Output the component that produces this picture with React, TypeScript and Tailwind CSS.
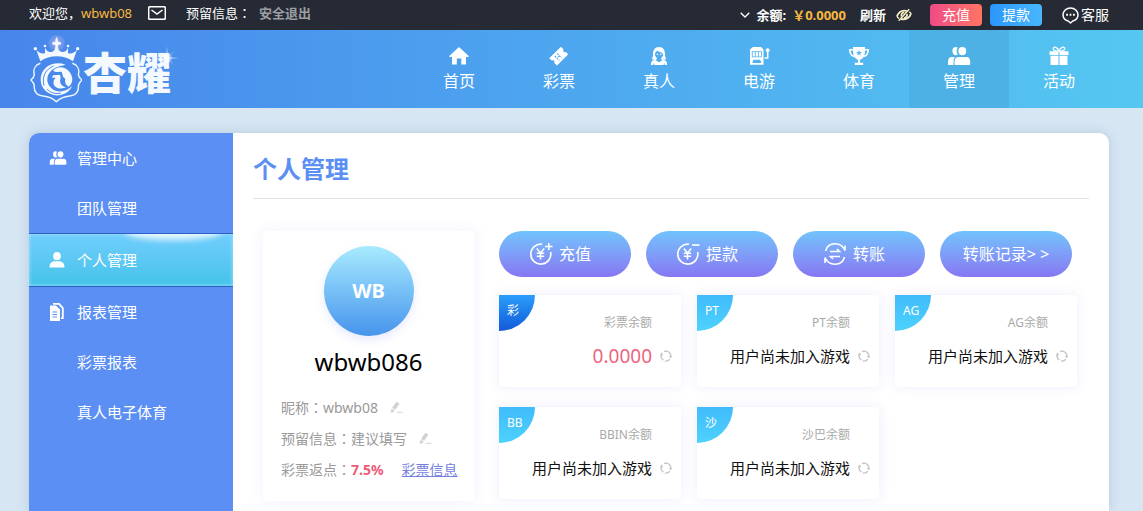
import type { ReactNode } from "react";

type IconProps = { className?: string };

function LogoEmblem({ className }: IconProps) {
  return (
    <svg viewBox="15 15 156 210" className={className} fill="none" aria-hidden="true">
      <defs>
        <radialGradient id="crownGlow">
          <stop offset="0" stopColor="#fff" stopOpacity="0.75" />
          <stop offset="0.5" stopColor="#e6b8e8" stopOpacity="0.35" />
          <stop offset="1" stopColor="#fff" stopOpacity="0" />
        </radialGradient>
      </defs>
      <circle cx="95" cy="42" r="27" fill="url(#crownGlow)" />
      <path
        fill="#f3f9ff"
        d="M46 97 L34 62 C42 72 52 76 60 72 L60 56 C65 67 76 73 86 66 C91 61 91 54 91 48 L82 46 C80 40 86 38 91 40 C92 34 90 31 95 23 C100 31 98 34 99 40 C104 38 110 40 108 46 L99 48 C99 54 99 61 104 66 C114 73 125 67 129 56 L129 72 C138 76 148 72 156 62 L144 97 C116 77 74 77 46 97 Z"
      />
      <g fill="#f3f9ff">
        <circle cx="31" cy="59" r="5" />
        <circle cx="60" cy="51" r="4" />
        <circle cx="129" cy="51" r="4" />
        <circle cx="158" cy="59" r="5" />
      </g>
      <path
        stroke="#e9f5ff"
        strokeWidth="4.5"
        strokeLinejoin="round"
        d="M46 103 C30 108 24 122 28 137 C27 144 23 149 18 153 C23 158 27 163 28 170 C26 189 37 199 54 201 C71 203 83 207 94 218 C105 207 117 203 134 201 C151 199 162 189 160 170 C161 163 165 158 171 153 C165 149 161 144 160 137 C164 122 158 108 142 103"
      />
      <path
        fill="#f3f9ff"
        d="M122 107 C88 94 50 112 47 148 C45 180 72 202 102 199 C122 196 136 185 141 171 C128 185 108 191 92 185 C68 177 60 150 73 132 C82 118 98 112 122 107 Z"
      />
      <path stroke="#4c8feb" strokeWidth="3" d="M57 170 C50 142 62 120 86 111 M66 180 C76 192 92 196 108 192" />
      <path
        fill="#f3f9ff"
        d="M84 125 C94 115 108 113 118 117 C131 122 141 135 142 150 C142 160 138 168 131 173 C123 169 118 160 121 150 L114 143 L110 128 L92 129 Z"
      />
      <path
        fill="#f3f9ff"
        d="M105 137 L84 139 L81 146 L92 146 C84 154 83 165 91 173 C100 180 114 180 123 175 C109 172 102 161 107 147 Z"
      />
    </svg>
  );
}

function HomeIcon({ className }: IconProps) {
  return (
    <svg viewBox="0 0 22 20" className={className} fill="currentColor" aria-hidden="true">
      <path d="M11 1 L21 10.2 L20.2 11 H18 V18.5 H13.3 V12.5 H8.8 V18.5 H4 V11 H1.8 L1 10.2 Z" />
    </svg>
  );
}

function TicketIcon({ className }: IconProps) {
  return (
    <svg viewBox="0 0 22 20" className={className} fill="currentColor" aria-hidden="true">
      <path d="M1.2 12.2 L13 .8 L15.5 3.4 C14.7 5.3 16 6.8 17.8 6 L20.3 8.2 L9 19.6 L6.3 16.9 C7 15 5.8 13.6 3.9 14.6 Z" />
      <path d="M9.2 7.5 L13.8 12.1 M6.8 10 L11.4 14.6 M11.3 9.8 L8.8 12.4" stroke="#4fa7ee" strokeWidth="1.1" strokeDasharray="1.8 1.2" />
    </svg>
  );
}

function DealerIcon({ className }: IconProps) {
  return (
    <svg viewBox="0 0 22 20" className={className} fill="currentColor" aria-hidden="true">
      <path
        fillRule="evenodd"
        d="M11 1 C6.7 1 5 4.5 5 8 C5 10.4 4.6 12 3.6 13.2 L7.4 14 C9.3 13.6 9 12.5 8.8 12 C6.2 9.5 6.3 6 9.8 4.8 C12 7.2 15 6 15.1 8.6 C15 10.3 14.2 11.4 13.2 12 C13 13 13.3 13.7 14.6 14 L18.4 13.2 C17.4 12 17 10.4 17 8 C17 4.5 15.3 1 11 1 Z"
      />
      <path d="M3 19 C2.5 16 4 14.3 7 13.8 L11 16.2 L15 13.8 C18 14.3 19.5 16 19 19 L16.6 19 V17 L15.4 19 H6.6 L5.4 17 V19 Z" />
      <circle cx="9.5" cy="8.2" r="0.8" />
      <circle cx="12.8" cy="8.2" r="0.8" />
    </svg>
  );
}

function SlotIcon({ className }: IconProps) {
  return (
    <svg viewBox="0 0 22 20" className={className} fill="currentColor" aria-hidden="true">
      <path
        fillRule="evenodd"
        d="M5 1 H13 L15.5 3.5 V18.8 H2 V3.5 Z M3.8 5.2 V11.2 H13.8 V5.2 Z M4.5 15.8 V17 H13 V15.8 L12 13.8 H5.5 Z"
      />
      <path d="M4.7 6 H6.8 V10.4 H4.7 Z M7.7 6 H9.9 V10.4 H7.7 Z M10.8 6 H13 V10.4 H10.8 Z" />
      <path d="M16.5 12 H19.7 V5" stroke="currentColor" strokeWidth="1.6" fill="none" />
      <circle cx="19.7" cy="4.2" r="1.9" />
    </svg>
  );
}

function TrophyIcon({ className }: IconProps) {
  return (
    <svg viewBox="0 0 22 20" className={className} fill="currentColor" aria-hidden="true">
      <path
        fillRule="evenodd"
        d="M5 1 H17 V3 H21 C21 8 19 10.7 15.3 11.3 C14.3 13 13 13.5 12 14 V16.7 H15.2 V19 H6.8 V16.7 H10 V14 C9 13.5 7.7 13 6.7 11.3 C3 10.7 1 8 1 3 H5 Z M2.7 4.5 C3 7.3 4 9 5.7 9.5 C5.2 8 5 6.2 5 4.5 Z M19.3 4.5 H17 C17 6.2 16.8 8 16.3 9.5 C18 9 19 7.3 19.3 4.5 Z M11 4 L10.2 5.9 L8.1 6 L9.7 7.4 L9.2 9.4 L11 8.3 L12.8 9.4 L12.3 7.4 L13.9 6 L11.8 5.9 Z"
      />
    </svg>
  );
}

function TeamIcon({ className }: IconProps) {
  return (
    <svg viewBox="0 0 24 20" className={className} fill="currentColor" aria-hidden="true">
      <path d="M8.7 1 C6.7 1 5.4 2.6 5.4 4.9 C5.4 7.3 6.8 9.2 8.8 9.3 C9.5 9.3 10.2 9 10.7 8.5 C9.3 6.3 9.3 3.8 10.8 1.8 C10.2 1.3 9.5 1 8.7 1 Z" />
      <ellipse cx="15.3" cy="5.1" rx="3.9" ry="4.2" />
      <path d="M8 11 H5 C2.3 11 1 13 1 15.6 V19 H6.5 V15.5 C6.5 13.5 7 12 8 11 Z M11.5 11 H19.5 C22 11 23.2 13 23.2 15.3 V17.7 C23.2 18.5 22.7 19 22 19 H8.7 C8 19 7.5 18.5 7.5 17.7 V15.3 C7.5 13 9 11 11.5 11 Z" />
    </svg>
  );
}

function GiftIcon({ className }: IconProps) {
  return (
    <svg viewBox="0 0 22 20" className={className} fill="currentColor" aria-hidden="true">
      <path d="M1.5 5.3 H10.5 V9 H1.5 Z M11.5 5.3 H20.5 V9 H11.5 Z M2.5 9.8 H10.5 V19 H2.5 Z M11.5 9.8 H19.5 V19 H11.5 Z" />
      <path d="M11 5 C7 5.4 4.7 4 5.3 2.3 C6 .3 9.5 1.2 11 5 C12.5 1.2 16 .3 16.7 2.3 C17.3 4 15 5.4 11 5 Z" fill="none" stroke="currentColor" strokeWidth="1.3" />
    </svg>
  );
}

function PersonIcon({ className }: IconProps) {
  return (
    <svg viewBox="0 0 16 16" className={className} fill="currentColor" aria-hidden="true">
      <ellipse cx="8" cy="4.2" rx="3.8" ry="4.1" />
      <path d="M1 15.5 Q.5 15.5 .5 15 C.5 11.5 3 9.3 5.5 9.3 H10.5 C13 9.3 15.5 11.5 15.5 15 Q15.5 15.5 15 15.5 Z" />
    </svg>
  );
}

function ReportIcon({ className }: IconProps) {
  return (
    <svg viewBox="0 0 16 18" className={className} fill="currentColor" aria-hidden="true">
      <path fillRule="evenodd" d="M1 2.5 H7 L11 6.5 V18 H1 Z M3.5 8.5 V9.5 H8 V8.5 Z M3.5 11 V12 H8 V11 Z M3.5 13.5 V14.5 H8 V13.5 Z" />
      <path d="M4 .8 H10 L13.8 5.2 V15.2 H12" fill="none" stroke="currentColor" strokeWidth="1.8" />
    </svg>
  );
}

function MailIcon({ className }: IconProps) {
  return (
    <svg viewBox="0 0 18 14" className={className} fill="none" stroke="currentColor" strokeWidth="1.5" aria-hidden="true">
      <rect x="0.7" y="0.7" width="16.6" height="12.6" rx="1.2" />
      <path d="M3.5 4 L9 8 L14.5 4" />
    </svg>
  );
}

function EyeOffIcon({ className }: IconProps) {
  return (
    <svg viewBox="0 0 16 14" className={className} fill="none" stroke="currentColor" aria-hidden="true">
      <path d="M1 8.2 C3 3.5 7 2 11 3 M15 5.5 C14 9.5 10 12 5 11" strokeWidth="1.8" />
      <path d="M1 8 C1.4 9.4 2.3 10 3.2 10.4 M15 5.8 C14.7 4.8 14 4.2 13.2 3.8" strokeWidth="1.4" />
      <path d="M2.7 12.8 L13.2 1.2" strokeWidth="1.5" />
      <path d="M5.5 8.5 C4.8 6.3 6.2 4.6 8.4 4.4 M8 10 C10.3 9.6 11.3 8 11 6" strokeWidth="1.8" />
    </svg>
  );
}

function ChatIcon({ className }: IconProps) {
  return (
    <svg viewBox="0 0 17 17" className={className} fill="none" stroke="currentColor" strokeWidth="1.5" aria-hidden="true">
      <path d="M6.2 14 C3 13.2 1 10.8 1 7.8 C1 4 4.3 1 8.5 1 S16 4 16 7.8 C16 10.8 13.8 13.2 10.8 14 L8.5 16 Z" strokeLinejoin="round" />
      <path d="M4.2 7.8 H6 M7.6 7.8 H9.4 M11 7.8 H12.8" strokeWidth="1.9" />
    </svg>
  );
}

function YuanIcon({ className, sign }: IconProps & { sign: "plus" | "minus" }) {
  return (
    <svg viewBox="0 0 24 24" className={className} fill="none" stroke="currentColor" strokeWidth="1.6" aria-hidden="true">
      <path d="M13 2.2 A10 10 0 1 0 21.6 10" />
      <path d="M7.8 6.5 L11.5 11 L15.2 6.5 M11.5 11 V17.5 M7.8 11.3 H15.2 M7.8 14.2 H15.2" />
      <path d={sign === "plus" ? "M16 4.5 H23.5 M19.8 1 V8" : "M16 3 H23.5"} />
    </svg>
  );
}

function TransferIcon({ className }: IconProps) {
  return (
    <svg viewBox="0 0 24 24" className={className} fill="none" stroke="currentColor" strokeWidth="1.6" aria-hidden="true">
      <path d="M2.5 9 C5 -.3 18 -.8 22 8.5 V3.5 M21.5 15 C19 24.3 6 24.8 2 15.5 V21" />
      <path d="M7 9.5 H16.5 L14 7 M17 14.5 H7.5 L10 17" />
    </svg>
  );
}

function RefreshIcon({ className }: IconProps) {
  return (
    <svg viewBox="0 0 12 12" className={className} fill="none" stroke="currentColor" strokeWidth="1.4" aria-hidden="true">
      <path d="M3.4 10.2 A5 5 0 0 1 2 3 M4 1.5 A5 5 0 0 1 10.8 7 M9.8 9.2 A5 5 0 0 1 5 11" />
      <path d="M.2 5.6 L1.4 4 L3 5.4 M9.2 6.4 L10.8 7.8 L12 6.2" strokeWidth="1" />
    </svg>
  );
}

function EditIcon({ className }: IconProps) {
  return (
    <svg viewBox="0 0 13 13" className={className} fill="currentColor" aria-hidden="true">
      <path d="M.6 11.8 L1.5 7.8 L4.6 9.6 L3.5 11.2 Z M2 7 L6.4 .8 L9.5 2.7 L5.1 8.8 Z M7 10.7 H12.5 V11.8 H7 Z" />
    </svg>
  );
}

// full-width colon, centred in its cell
function Colon() {
  return <span className="font-['Noto_Sans_CJK_TC',sans-serif]">：</span>;
}

interface NavItem {
  label: string;
  icon: ReactNode;
  active?: boolean;
}

const NAV_ITEMS: NavItem[] = [
  { label: "首页", icon: <HomeIcon className="h-5 w-[22px]" /> },
  { label: "彩票", icon: <TicketIcon className="h-5 w-[22px]" /> },
  { label: "真人", icon: <DealerIcon className="h-5 w-[22px]" /> },
  { label: "电游", icon: <SlotIcon className="h-5 w-[22px]" /> },
  { label: "体育", icon: <TrophyIcon className="h-5 w-[22px]" /> },
  { label: "管理", icon: <TeamIcon className="h-5 w-6" />, active: true },
  { label: "活动", icon: <GiftIcon className="h-5 w-[22px]" /> },
];

const MENU_ITEMS: { label: string; icon?: ReactNode; active?: boolean }[] = [
  { label: "管理中心", icon: <TeamIcon className="h-4 w-[18px]" /> },
  { label: "团队管理" },
  { label: "个人管理", icon: <PersonIcon className="size-4" />, active: true },
  { label: "报表管理", icon: <ReportIcon className="h-[18px] w-4" /> },
  { label: "彩票报表" },
  { label: "真人电子体育" },
];

const ACTIONS: { label: string; icon?: ReactNode }[] = [
  { label: "充值", icon: <YuanIcon sign="plus" className="size-6" /> },
  { label: "提款", icon: <YuanIcon sign="minus" className="size-6" /> },
  { label: "转账", icon: <TransferIcon className="size-6" /> },
  { label: "转账记录> >" },
];

const BALANCES: { tag: string; label: string; amount?: string }[] = [
  { tag: "彩", label: "彩票余额", amount: "0.0000" },
  { tag: "PT", label: "PT余额" },
  { tag: "AG", label: "AG余额" },
  { tag: "BB", label: "BBIN余额" },
  { tag: "沙", label: "沙巴余额" },
];

function TopBar() {
  return (
    <div className="flex h-[30px] items-center justify-between bg-[#252a34] pr-[34px] pl-[29px] text-[13px] leading-[26px] whitespace-nowrap text-white">
      <div className="flex h-[30px] items-start">
        <span>
          欢迎您，<span className="text-[#f8b840]">wbwb08</span>
        </span>
        <a href="#mail" aria-label="站内信" className="mr-5 ml-4 flex h-[26px] items-center">
          <MailIcon className="h-3.5 w-[18px]" />
        </a>
        <span>
          预留信息
          <Colon />
        </span>
        <a href="#logout" className="ml-2 font-bold text-[#9b9ea3]">
          安全退出
        </a>
      </div>
      <div className="flex items-center">
        <button type="button" className="flex items-center font-bold">
          <svg viewBox="0 0 10 6" className="mr-1.5 h-1.5 w-2.5" fill="none" stroke="currentColor" strokeWidth="1.3" aria-hidden="true">
            <path d="M.7 .7 L5 5 L9.3 .7" />
          </svg>
          余额:
          <span className="ml-1.5 text-[#f8b840]">￥0.0000</span>
        </button>
        <button type="button" className="ml-3.5 font-bold">
          刷新
        </button>
        <button type="button" aria-label="隐藏余额" className="ml-2.5 text-[#f7f0c4]">
          <EyeOffIcon className="h-3.5 w-4" />
        </button>
        <button type="button" className="ml-[18px] h-[22px] w-[52px] rounded bg-linear-to-r from-[#f04a85] to-[#fe7463] text-sm leading-[22px]">
          充值
        </button>
        <button type="button" className="ml-2 h-[22px] w-[52px] rounded bg-linear-to-r from-[#2b97fb] to-[#48b7fd] text-sm leading-[22px]">
          提款
        </button>
        <a href="#service" className="ml-5 flex items-center gap-0.5 text-sm">
          <ChatIcon className="size-[17px]" />
          客服
        </a>
      </div>
    </div>
  );
}

function Header() {
  return (
    <header className="flex h-[78px] items-center justify-between bg-linear-to-r from-[#4885eb] to-[#55c7f1] pr-[34px] pl-[30px] text-white">
      <a href="#home" className="relative flex items-center">
        <LogoEmblem className="h-[70px] w-[52px]" />
        <span className="ml-px pt-2 text-[44px] leading-[56px] font-black text-[#f3f9ff]">杏耀</span>
        <svg viewBox="0 0 24 24" className="absolute top-3 -right-2 size-6" aria-hidden="true">
          <defs>
            <radialGradient id="sparkle">
              <stop offset="0" stopColor="#fff" />
              <stop offset="1" stopColor="#fff" stopOpacity="0" />
            </radialGradient>
          </defs>
          <circle cx="12" cy="12" r="6" fill="url(#sparkle)" />
          <path
            d="M12 0 L12.7 11.3 L24 12 L12.7 12.7 L12 24 L11.3 12.7 L0 12 L11.3 11.3 Z M5 5 L12 11.5 L19 5 L12.5 12 L19 19 L12 12.5 L5 19 L11.5 12 Z"
            fill="#fff"
            fillOpacity=".7"
          />
        </svg>
      </a>
      <nav className="flex h-full">
        {NAV_ITEMS.map((item) => (
          <a
            key={item.label}
            href="#nav"
            className={`flex w-[100px] flex-col items-center pt-4 text-base leading-[30px] ${item.active ? "bg-[#4eb1e6]" : ""}`}
          >
            {item.icon}
            {item.label}
          </a>
        ))}
      </nav>
    </header>
  );
}

function Sidebar() {
  return (
    <aside className="w-[204px] shrink-0 rounded-tl-[10px] bg-[#5b8ff4] text-[15px] text-white">
      {MENU_ITEMS.map((item) => (
        <a
          key={item.label}
          href="#menu"
          className={
            item.active
              ? "relative flex h-[54px] items-center overflow-hidden border-y border-[#2f5fc4] bg-linear-to-b from-[#70cdfd] to-[#42c3e8] pl-5 shadow-[inset_0_0_4px_#a5e5ff]"
              : "flex h-[50px] items-center pl-5"
          }
        >
          {item.active && <span className="absolute -top-2.5 left-24 h-4 w-24 rounded-[50%] bg-white/80 blur-[3px]" />}
          <span className="flex w-7 items-center">{item.icon}</span>
          {item.label}
        </a>
      ))}
    </aside>
  );
}

function ProfileCard() {
  return (
    <section className="h-[270px] w-[211px] shrink-0 rounded bg-white pt-[15px] shadow-[0_0_14px_rgba(110,110,240,0.1)]">
      <div className="mx-auto flex size-[90px] items-center justify-center rounded-full bg-linear-to-b from-[#a8ebfe] to-[#4794ec] text-xl font-bold text-white shadow-[0_4px_10px_rgba(90,110,240,0.15)]">
        WB
      </div>
      <h2 className="mt-2 text-center text-2xl leading-9 text-black">wbwb086</h2>
      <dl className="mt-3 pl-[18px] text-sm leading-[30px] whitespace-nowrap text-[#999]">
        <div className="flex items-center">
          <dt>
            昵称
            <Colon />
          </dt>
          <dd>wbwb08</dd>
          <button type="button" aria-label="修改昵称" className="ml-3 text-[#d2d2d2]">
            <EditIcon className="size-[13px]" />
          </button>
        </div>
        <div className="flex items-center">
          <dt>
            预留信息
            <Colon />
          </dt>
          <dd>建议填写</dd>
          <button type="button" aria-label="修改预留信息" className="ml-3 text-[#d2d2d2]">
            <EditIcon className="size-[13px]" />
          </button>
        </div>
        <div className="flex items-center">
          <dt>
            彩票返点
            <Colon />
          </dt>
          <dd className="font-bold text-[#ec5b78]">7.5%</dd>
          <dd className="ml-[18px]">
            <a href="#lottery" className="text-[#7480df] underline">
              彩票信息
            </a>
          </dd>
        </div>
      </dl>
    </section>
  );
}

function BalanceCard({ tag, label, amount }: { tag: string; label: string; amount?: string }) {
  return (
    <article className="relative h-[92px] w-[182px] rounded bg-white pt-4 pr-[9px] shadow-[0_0_12px_rgba(110,110,240,0.13)]">
      <span
        className={`absolute top-0 left-0 size-9 rounded-tl rounded-br-full bg-linear-to-b pl-2 text-xs leading-8 text-white ${
          amount ? "from-[#2c9dfa] to-[#1659d8]" : "from-[#41bbfb] to-[#4dd2fc]"
        }`}
      >
        {tag}
      </span>
      <h3 className="pr-5 text-right text-xs leading-6 text-[#aaa]">{label}</h3>
      <div className="mt-1.5 flex h-[30px] items-center justify-end gap-2 whitespace-nowrap">
        {amount ? (
          <span className="text-[19px] text-[#ec6680]">{amount}</span>
        ) : (
          <span className="text-[15px] text-[#111]">用户尚未加入游戏</span>
        )}
        <button type="button" aria-label="刷新余额" className="text-[#c4c4c4]">
          <RefreshIcon className="size-3" />
        </button>
      </div>
    </article>
  );
}

export default function App() {
  return (
    <div className="flex min-h-screen flex-col bg-[#d7e6f3] font-['Noto_Sans','Noto_Sans_CJK_SC',sans-serif]">
      <TopBar />
      <Header />
      <div className="flex flex-1 pt-[25px] pr-[34px] pl-[29px]">
        <div className="flex flex-1 rounded-t-[10px] bg-white shadow-[0_0_12px_rgba(80,120,160,0.25)]">
          <Sidebar />
          <main className="min-w-0 flex-1 px-5 pt-[18px]">
            <h1 className="border-b border-[#e3e3e3] pb-[11px] text-2xl leading-9 font-bold text-[#5b8ff4]">个人管理</h1>
            <div className="flex gap-[25px] pt-8 pb-2.5 pl-2.5">
              <ProfileCard />
              <div className="min-w-0 flex-1">
                <div className="flex flex-wrap gap-[15px]">
                  {ACTIONS.map((action) => (
                    <button
                      key={action.label}
                      type="button"
                      className={`flex h-[46px] w-[132px] items-center justify-center gap-1.5 rounded-full bg-linear-to-b from-[#70c3fc] to-[#8676f2] text-base text-white ${
                        action.icon ? "pr-2.5" : ""
                      }`}
                    >
                      {action.icon}
                      {action.label}
                    </button>
                  ))}
                </div>
                <div className="mt-[18px] flex flex-wrap gap-x-4 gap-y-5">
                  {BALANCES.map((balance) => (
                    <BalanceCard key={balance.tag} {...balance} />
                  ))}
                </div>
              </div>
            </div>
          </main>
        </div>
      </div>
    </div>
  );
}
